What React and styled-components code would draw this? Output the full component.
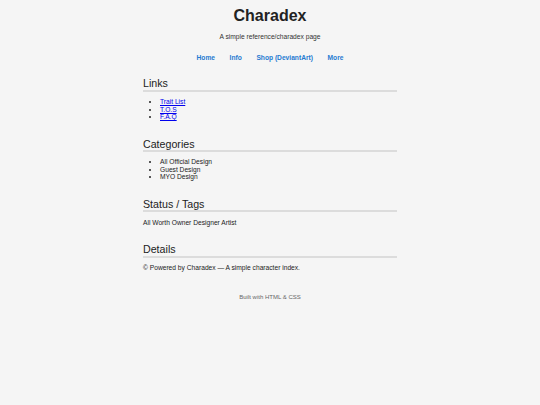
import * as React from "react";
import styled, { createGlobalStyle } from "styled-components";

const GlobalStyle = createGlobalStyle`
  html, body {
    margin: 0;
    padding: 0;
    background: #f5f5f5;
  }
  body {
    font-family: "Liberation Sans", Arial, sans-serif;
    color: #222;
  }
`;

const Page = styled.div`
  min-height: 100vh;
  background: #f5f5f5;
  padding-top: 6.6px;
`;

const Header = styled.header`
  text-align: center;
`;

const Title = styled.h1`
  margin: 0;
  font-size: 16px;
  line-height: 18.4px;
  font-weight: bold;
  color: #222;
`;

const Subtitle = styled.p`
  margin: 7.5px 0 0;
  font-size: 6.67px;
  line-height: 7.67px;
  color: #333;
`;

const Nav = styled.nav`
  display: flex;
  justify-content: center;
  gap: 14.6px;
  margin-top: 14.3px;
`;

const NavLink = styled.a`
  font-size: 6.67px;
  line-height: 7.67px;
  font-weight: bold;
  color: #1f7ad1;
  text-decoration: none;
`;

const Main = styled.main`
  width: 254px;
  margin: 15.3px auto 0;
`;

const Section = styled.section`
  margin-bottom: 17px;
`;

const Heading = styled.h2`
  margin: 0;
  font-size: 10.67px;
  line-height: 12.27px;
  font-weight: normal;
  color: #222;
  border-bottom: 2px solid #dcdcdc;
`;

const List = styled.ul`
  margin: 6.5px 0 0;
  padding-left: 17px;
  font-size: 6.67px;
  line-height: 7.5px;
  color: #222;
`;

const ListLink = styled.a`
  color: #0000ee;
  text-decoration: underline;
`;

const Text = styled.p`
  margin: 6.5px 0 0;
  font-size: 6.67px;
  line-height: 7.5px;
  color: #222;
`;

const Footer = styled.footer`
  margin-top: 22px;
  text-align: center;
  font-size: 6px;
  line-height: 7px;
  color: #666;
`;

const navItems = ["Home", "Info", "Shop (DeviantArt)", "More"];
const links = ["Trait List", "T.O.S", "F.A.Q"];
const categories = ["All Official Design", "Guest Design", "MYO Design"];

export default function App() {
  return (
    <>
      <GlobalStyle />
      <Page>
        <Header>
          <Title>Charadex</Title>
          <Subtitle>A simple reference/charadex page</Subtitle>
          <Nav>
            {navItems.map((item) => (
              <NavLink key={item} href="#">
                {item}
              </NavLink>
            ))}
          </Nav>
        </Header>
        <Main>
          <Section>
            <Heading>Links</Heading>
            <List>
              {links.map((l) => (
                <li key={l}>
                  <ListLink href="#">{l}</ListLink>
                </li>
              ))}
            </List>
          </Section>
          <Section>
            <Heading>Categories</Heading>
            <List>
              {categories.map((c) => (
                <li key={c}>{c}</li>
              ))}
            </List>
          </Section>
          <Section>
            <Heading>Status / Tags</Heading>
            <Text>All Worth Owner Designer Artist</Text>
          </Section>
          <Section>
            <Heading>Details</Heading>
            <Text>© Powered by Charadex — A simple character index.</Text>
          </Section>
        </Main>
        <Footer>Built with HTML &amp; CSS</Footer>
      </Page>
    </>
  );
}
